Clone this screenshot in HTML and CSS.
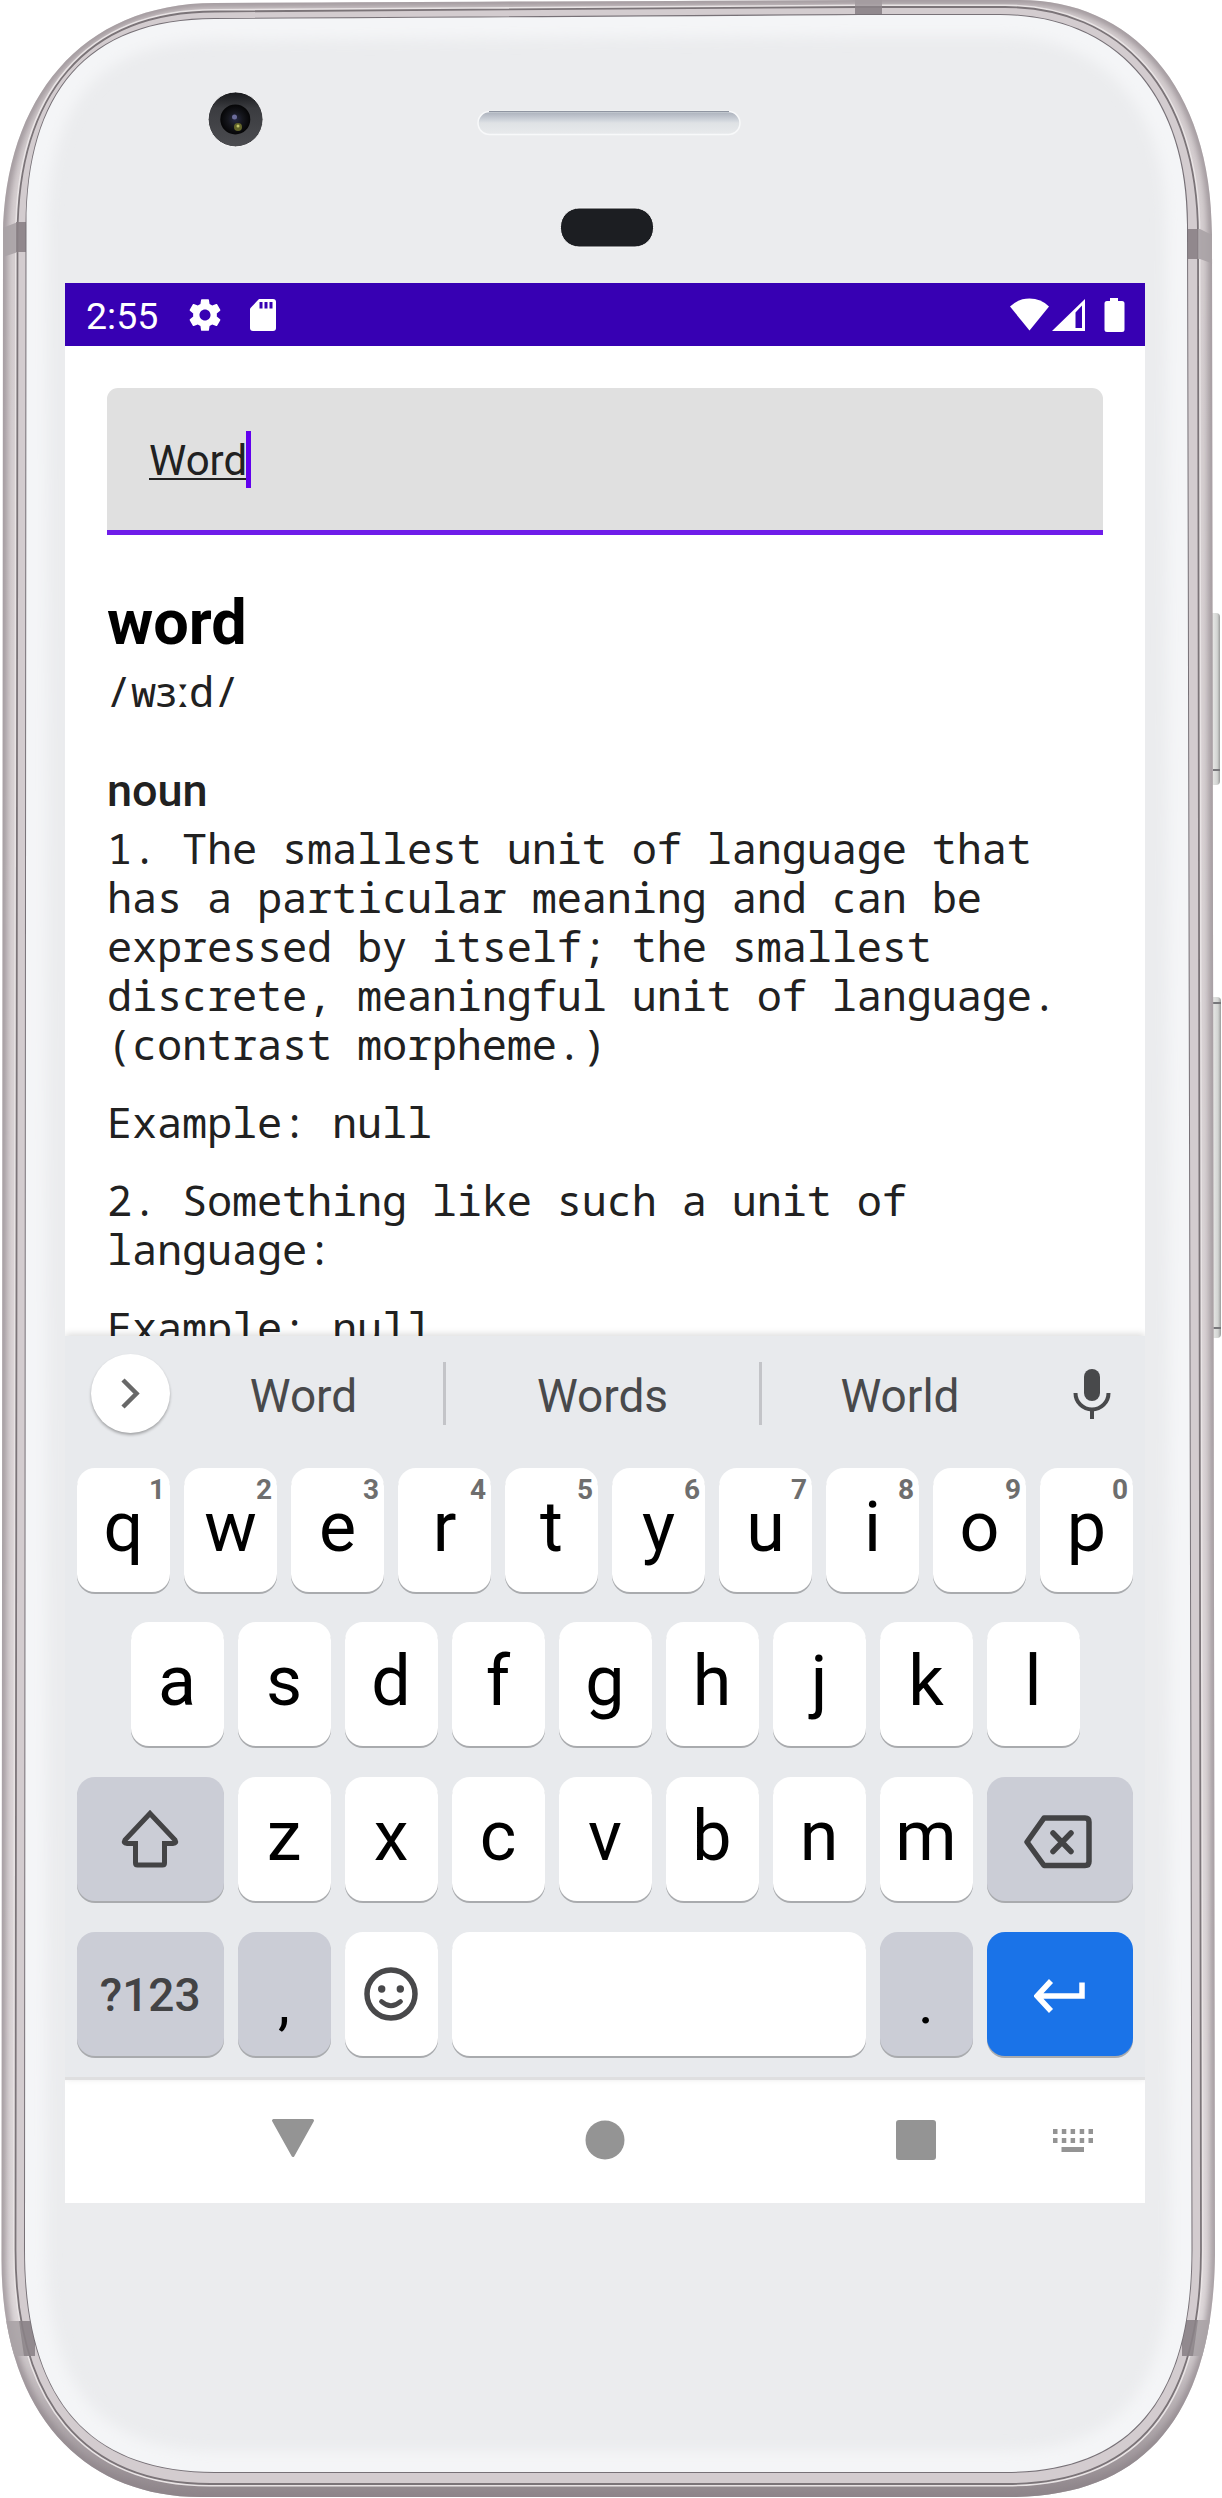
FILE: index.html
```html
<!DOCTYPE html>
<html lang="en">
<head>
<meta charset="utf-8">
<title>Dictionary</title>
<link rel="stylesheet" href="styles.css">
</head>
<body>
<div class="phone">
  <svg class="shell" viewBox="0 0 1222 2498" aria-hidden="true">
    <defs>
      <path id="outer" d="M3 235C5 100 80 3 215 3Q600 1 860 0H1020C1130 0 1212 85 1212 235L1215 2255C1213 2415 1145 2497 1010 2497H200C85 2497 1.500 2415 1.500 2260Z"/>
      <path id="groove" d="M17.500 235C18 95 85 11.500 215 11.500Q600 9 860 7H1005C1120 7 1198 90 1198 235L1201 2250C1201 2408 1135 2484 1007 2484H210C85 2484 15.500 2403 15.500 2250Z"/>
      <path id="face" d="M26.500 225C27 95 85 19 215 19Q600 17 860 15H1000C1115 15 1187 95 1187 225L1191.500 2250C1191.500 2400 1130 2472 1005 2472H215C85 2472 25 2395 25 2250Z"/>
      <clipPath id="outerClip"><use href="#outer"/></clipPath>
      <clipPath id="faceClip"><use href="#face"/></clipPath>
      <filter id="soft" x="-5%" y="-5%" width="110%" height="110%"><feGaussianBlur stdDeviation="3"/></filter>
      <filter id="softer" x="-5%" y="-5%" width="110%" height="110%"><feGaussianBlur stdDeviation="7"/></filter>
      <linearGradient id="metal" x1="0" y1="0" x2="0" y2="1">
        <stop offset="0" stop-color="#d5ced0"/><stop offset=".93" stop-color="#ded8da"/><stop offset="1" stop-color="#8f868b"/>
      </linearGradient>
      <linearGradient id="grille" x1="0" y1="0" x2="0" y2="1">
        <stop offset="0" stop-color="#a9afba"/><stop offset=".35" stop-color="#cdd2d9"/><stop offset=".5" stop-color="#dfe2e5"/><stop offset="1" stop-color="#e8eaec"/>
      </linearGradient>
      <linearGradient id="button" x1="0" y1="0" x2="1" y2="0">
        <stop offset="0" stop-color="#a9a9a8"/><stop offset=".4" stop-color="#e3e4e2"/><stop offset=".75" stop-color="#d2d4d2"/><stop offset="1" stop-color="#9b9c9b"/>
      </linearGradient>
      <radialGradient id="lens"><stop offset="0" stop-color="#272a45"/><stop offset=".5" stop-color="#15161c"/><stop offset="1" stop-color="#050506"/></radialGradient>
      <linearGradient id="ring" x1="0" y1="0" x2="0" y2="1"><stop offset="0" stop-color="#17181b"/><stop offset=".3" stop-color="#3b3c40"/><stop offset="1" stop-color="#4b4c50"/></linearGradient>
    </defs>
    <rect x="1209" y="613" width="11" height="172" rx="4" fill="url(#button)"/>
    <rect x="1209" y="997" width="12" height="341" rx="4" fill="url(#button)"/>
    <path d="M1213 1003h8M1213 1328h8M1213 770h7" stroke="#77777a" stroke-width="2"/>
    <use href="#outer" fill="url(#metal)"/>
    <g clip-path="url(#outerClip)">
      <use href="#outer" fill="none" stroke="#8d8489" stroke-opacity=".75" stroke-width="9" filter="url(#soft)"/>
      <use href="#groove" fill="#d3cccf" stroke="#e8e3e4" stroke-width="5"/>
      <use href="#groove" fill="#d3cccf" stroke="#7b7478" stroke-width="1.800"/>
      <g opacity=".9">
        <path d="M0 229l18-7h10v30H18L0 258Z" fill="#a9a2a6"/><path d="M16 222h12v30H16Z" fill="#8a8186"/>
        <path d="M1186 229h14l14 7v28l-14-5h-14Z" fill="#a9a2a6"/><path d="M1186 229h12v30h-12Z" fill="#8a8186"/>
        <path d="M855 0h27v16h-27Z" fill="#a39ca0"/><path d="M855 6h27v10h-27Z" fill="#8a8287"/>
        <path d="M0 2321h35v35H0Z" fill="#aaa4a7"/><path d="M19 2321h16v35H24Z" fill="#8a8287"/>
        <path d="M1182 2320h34v36h-34Z" fill="#aaa4a7"/><path d="M1182 2320h16l-5 36h-11Z" fill="#8a8287"/>
      </g>
    </g>
    <use href="#face" fill="#ebecee" stroke="#777177" stroke-width="2"/>
    <g clip-path="url(#faceClip)">
      <use href="#face" fill="none" stroke="#f4f5f7" stroke-width="42" filter="url(#softer)"/>
    </g>
    <circle cx="235.600" cy="119.400" r="27.500" fill="url(#ring)" stroke="#f7f7f8"/>
    <circle cx="235.300" cy="119.400" r="15" fill="url(#lens)"/>
    <circle cx="234.500" cy="117" r="2.500" fill="#6b6c9a"/>
    <circle cx="238" cy="127" r="4" fill="#62642a"/>
    <circle cx="238" cy="126" r="1.500" fill="#c3c56a"/>
    <rect x="478" y="111.500" width="262" height="23" rx="11.500" fill="url(#grille)" stroke="#f8f9fa" stroke-width="1.500"/>
    <path d="M489 111.500h240" stroke="#8f95a1" stroke-width="1.200"/>
    <rect x="560.500" y="208" width="93" height="39" rx="18.500" fill="#1c1e22" stroke="#f7f7f8"/>
  </svg>

  <main class="screen">
    <header class="status">
      <span class="clock">2:55</span>
      <svg class="gear" width="38" height="38" viewBox="0 0 24 24"><path fill="#fff" d="M19.430 12.980c.04-.32.07-.64.07-.98s-.03-.66-.07-.98l2.110-1.650c.19-.15.24-.42.12-.64l-2-3.460c-.12-.22-.39-.3-.61-.22l-2.490 1c-.52-.4-1.080-.73-1.690-.98l-.38-2.650C14.460 2.180 14.250 2 14 2h-4c-.25 0-.46.18-.49.42l-.38 2.650c-.61.25-1.170.59-1.690.98l-2.490-1c-.23-.09-.49 0-.61.22l-2 3.460c-.13.22-.07.49.12.64l2.110 1.650c-.04.32-.07.65-.07.98s.03.66.07.98l-2.110 1.650c-.19.15-.24.42-.12.64l2 3.460c.12.22.39.3.61.22l2.490-1c.52.4 1.080.73 1.690.98l.38 2.650c.03.24.24.42.49.42h4c.25 0 .46-.18.49-.42l.38-2.650c.61-.25 1.170-.59 1.690-.98l2.490 1c.23.09.49 0 .61-.22l2-3.460c.12-.22.07-.49-.12-.64l-2.110-1.650zM12 15.500c-1.930 0-3.500-1.570-3.500-3.500s1.570-3.500 3.500-3.500 3.500 1.570 3.500 3.500-1.570 3.500-3.500 3.500z"/></svg>
      <svg class="sd" width="26" height="32" viewBox="0 0 26 32"><path fill="#fff" d="M9 0h14a3 3 0 0 1 3 3v26a3 3 0 0 1-3 3H3a3 3 0 0 1-3-3V9.500Z"/><path fill="#3700b3" d="M9.500 3h3v6.500h-3zM14.500 3h3v6.500h-3zM19.500 3h3v6.500h-3z"/></svg>
      <span class="space"></span>
      <svg class="signals" width="115" height="34" viewBox="0 0 115 34"><g fill="#fff"><path d="M0 8.500Q8 .5 19.500 .5T39 8.500L19.500 32.500Z"/><path fill-rule="evenodd" d="M75 1v32H42ZM65.500 14.500v15.500h6.500V7.500Z"/><path d="M66.500 17l3.500-4v15.500h-3.500Z" fill="#3700b3"/><path d="M100 0h8v3h4a2.500 2.500 0 0 1 2.500 2.500v26a2.500 2.500 0 0 1-2.500 2.500H97a2.500 2.500 0 0 1-2.500-2.500v-26A2.500 2.500 0 0 1 97 3h3Z"/></g></svg>
    </header>

    <section class="app">
      <div class="field"><span class="query">Word</span><i class="caret"></i></div>
      <h1 class="headword">word</h1>
      <p class="mono phonetic">/w<span class="ipa">ɜː</span>d/</p>
      <h2 class="pos">noun</h2>
      <p class="mono">1. The smallest unit of language that<br>has a particular meaning and can be<br>expressed by itself; the smallest<br>discrete, meaningful unit of language.<br>(contrast morpheme.)</p>
      <p class="mono">Example: null</p>
      <p class="mono">2. Something like such a unit of<br>language:</p>
      <p class="mono">Example: null</p>
    </section>

    <section class="keyboard">
      <div class="suggest">
        <span class="more"><svg width="20" height="31" viewBox="0 0 20 31"><path d="M2 2l13.500 13.500L2 29" fill="none" stroke="#686868" stroke-width="4.500"/></svg></span>
        <span class="word first">Word</span><i class="bar"></i><span class="word middle">Words</span><i class="bar"></i><span class="word last">World</span>
        <svg class="mic" width="38" height="52" viewBox="0 0 38 52"><rect x="11" y="1" width="16" height="32" rx="8" fill="#48494b"/><path d="M2.500 25a16.500 16.500 0 0 0 33 0M19 41v10" fill="none" stroke="#48494b" stroke-width="4"/></svg>
      </div>
      <div class="row top">
        <span class="key">q<sup>1</sup></span><span class="key">w<sup>2</sup></span><span class="key">e<sup>3</sup></span><span class="key">r<sup>4</sup></span><span class="key">t<sup>5</sup></span><span class="key">y<sup>6</sup></span><span class="key">u<sup>7</sup></span><span class="key">i<sup>8</sup></span><span class="key">o<sup>9</sup></span><span class="key">p<sup>0</sup></span>
      </div>
      <div class="row">
        <span class="key">a</span><span class="key">s</span><span class="key">d</span><span class="key">f</span><span class="key">g</span><span class="key">h</span><span class="key">j</span><span class="key">k</span><span class="key">l</span>
      </div>
      <div class="row">
        <span class="key wide gray icon"><svg width="62" height="60" viewBox="0 0 62 60"><path d="M31 4.500L56 31Q58 34.500 54 34.500H45.500V54Q45.500 56 43.500 56H18.500Q16.500 56 16.500 54V34.500H8Q4 34.500 6 31Z" fill="none" stroke="#434345" stroke-width="5"/></svg></span><span class="key">z</span><span class="key">x</span><span class="key">c</span><span class="key">v</span><span class="key">b</span><span class="key">n</span><span class="key">m</span><span class="key wide gray icon del"><svg width="68" height="54" viewBox="0 0 68 54"><path d="M20 3H61Q65 3 65 7V46.500Q65 50.500 61 50.500H20L3 27Z" fill="none" stroke="#434345" stroke-width="5.500" stroke-linejoin="round"/><path d="M29 18L47 36.500M47 18L29 36.500" stroke="#434345" stroke-width="5.500" stroke-linecap="round"/></svg></span>
      </div>
      <div class="row">
        <span class="key wide gray sym">?123</span><span class="key gray punct">,</span><span class="key icon"><svg width="54" height="54" viewBox="0 0 54 54"><circle cx="27" cy="27" r="24" fill="none" stroke="#48484a" stroke-width="5.500"/><circle cx="17.700" cy="22" r="3.700" fill="#48484a"/><circle cx="36.300" cy="22" r="3.700" fill="#48484a"/><path d="M17.500 34.500Q27 43 36.500 34.500" fill="none" stroke="#48484a" stroke-width="4.800" stroke-linecap="round"/></svg></span><span class="key spacebar"></span><span class="key gray punct">.</span><span class="key wide enter icon"><svg width="52" height="34" viewBox="0 0 52 34"><path d="M17 2L3 17L17 32M4 17H48V3.500" fill="none" stroke="#fff" stroke-width="5.500"/></svg></span>
      </div>
    </section>

    <nav class="nav">
      <svg width="1080" height="123" viewBox="0 0 1080 123" fill="#949494"><path stroke="#949494" stroke-width="3" stroke-linejoin="round" d="M208.500 40.500h39L228 75.500Z"/><circle cx="540" cy="60" r="19.500"/><rect x="831" y="40" width="40" height="40" rx="3"/><path d="M988 49h4.500v5H988zM996.800 49h4.500v5h-4.500zM1005.600 49h4.500v5h-4.500zM1014.700 49h4.500v5h-4.500zM1023.500 49h4.500v5h-4.500zM988 58h4.500v5H988zM996.800 58h4.500v5h-4.500zM1005.600 58h4.500v5h-4.500zM1014.700 58h4.500v5h-4.500zM1023.500 58h4.500v5h-4.500zM996.500 67h22.500v5h-22.500z"/></svg>
    </nav>
  </main>
</div>
</body>
</html>
```

FILE: styles.css
```css
* { box-sizing: border-box; }
body { margin: 0; background: #fff; font-family: Roboto, "Liberation Sans", sans-serif; }
.phone { position: relative; width: 1222px; height: 2498px; padding: 283px 77px 0 65px; overflow: hidden; }
.shell { position: absolute; inset: 0; width: 1222px; height: 2498px; }
.screen { position: relative; display: flex; flex-direction: column; width: 1080px; height: 1920px; background: #fff; overflow: hidden; }
svg { display: block; flex: none; }

.status { display: flex; align-items: center; height: 63px; padding: 0 20px 0 21px; background: #3700b3; color: #fff; }
.clock { width: 100px; padding-top: 3px; font-size: 37.500px; line-height: 60px; }
.gear { margin-right: 26px; }
.space { flex: 1; }

.app { height: 990px; padding: 42px; overflow: hidden; color: #212121; }
.field { display: flex; align-items: center; height: 147px; padding: 0 42px; background: #e0e0e0; border-bottom: 5.500px solid #6f1de9; border-radius: 11px 11px 0 0; }
.query { padding-top: 4px; font-size: 42px; line-height: 50px; text-decoration: underline; text-decoration-thickness: 2px; text-underline-offset: 3px; text-decoration-skip-ink: none; }
.caret { width: 5px; height: 57px; margin-left: -1px; background: #6200ee; }
.headword { margin: 51px 0 0; font-size: 63px; line-height: 74px; font-weight: 700; color: #000; }
.mono { margin: 0 0 29px; font-family: "Droid Sans Mono", "Noto Sans Mono", "DejaVu Sans Mono", monospace; font-size: 42px; line-height: 49px; letter-spacing: -0.210px; white-space: nowrap; }
.phonetic { margin: 6px 0 0 -1px; }
.ipa { font-family: "Noto Sans", sans-serif; letter-spacing: -0.600px; }
.pos { margin: 50px 0 0; font-size: 45px; line-height: 52px; font-weight: 500; }
.pos + .mono { margin-top: 6px; }

.keyboard { position: relative; height: 744px; padding: 0 12px; background: #e8eaed; border-bottom: 3px solid #dfdfe0; box-shadow: 0 -2px 7px rgba(0, 0, 0, .14); }
.suggest { display: flex; align-items: center; height: 132px; padding: 0 22px 17px 14px; }
.more { display: flex; align-items: center; justify-content: center; width: 79px; height: 79px; border-radius: 50%; background: #fff; box-shadow: 0 2px 3px rgba(0, 0, 0, .3); }
.word { text-align: center; font-size: 46px; line-height: 54px; color: #48494b; padding-top: 5px; }
.first { width: 273px; padding-right: 6px; }
.middle { width: 313px; }
.last { width: 276px; }
.bar { width: 3px; height: 63px; background: #c3c4c8; }
.mic { margin-left: auto; }
.row { display: flex; justify-content: center; gap: 14px; height: 124px; margin-bottom: 31px; }
.top { margin-bottom: 30px; }
.key { position: relative; width: 93px; height: 124px; border-radius: 18px; background: #fff; box-shadow: 0 2px 0 #a9abae; color: #000; font-size: 70px; line-height: 118px; text-align: center; }
.key sup { position: absolute; top: 6px; right: 5px; font-size: 28px; line-height: 32px; font-weight: 700; color: #6e6e6e; }
.wide { width: 146.500px; }
.gray { background: #cbcdd6; }
.icon { display: flex; align-items: center; justify-content: center; }
.del { padding: 6px 3px 0 0; }
.sym { font-size: 46px; font-weight: 500; line-height: 126px; color: #434345; }
.punct { font-size: 60px; line-height: 142px; }
.spacebar { width: 414px; }
.enter { background: #1a73e8; padding-top: 4px; }
.nav { height: 123px; background: #fff; }
```
